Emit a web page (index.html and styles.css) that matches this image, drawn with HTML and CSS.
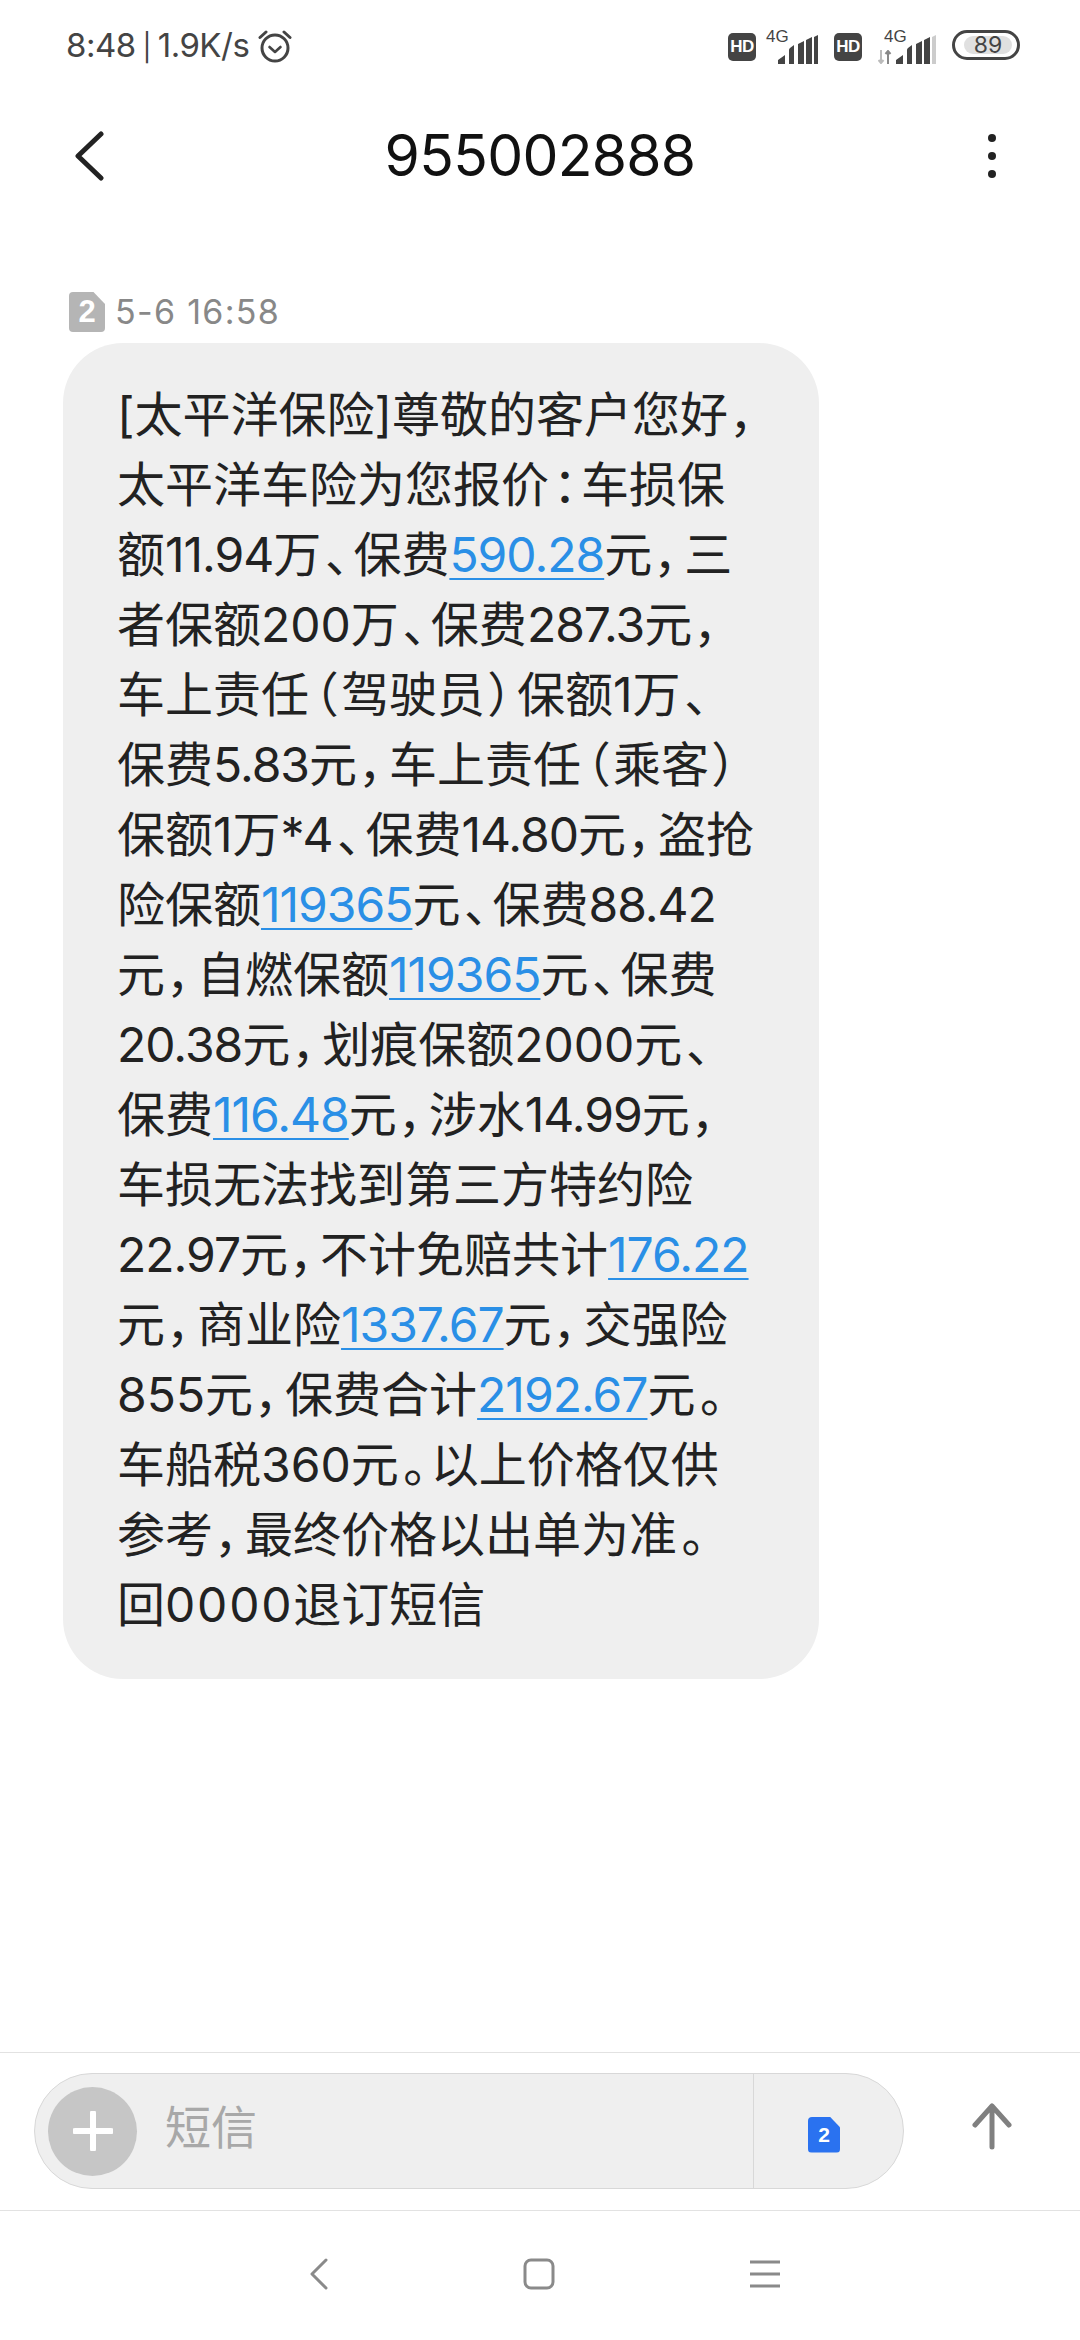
FILE: index.html
```html
<!DOCTYPE html>
<html lang="zh-CN">
<head>
<meta charset="utf-8">
<title>955002888</title>
<link rel="stylesheet" href="styles.css">
</head>
<body>
<div class="screen">
  <div class="status">
    <div class="status-left">
      <span class="clock">8:48 <span class="sep">|</span> 1.9K/s</span>
      <svg class="alarm" viewBox="0 0 34 34" width="34" height="34"><circle cx="17" cy="19" r="13" fill="none" stroke="#444" stroke-width="3"/><path d="M11.5 18l5.5 5 5.500-5" fill="none" stroke="#444" stroke-width="2.600" stroke-linecap="round" stroke-linejoin="round"/><path d="M2 8.500L8 3M32 8.500L26 3" fill="none" stroke="#444" stroke-width="3" stroke-linecap="round"/></svg>
    </div>
    <div class="status-right">
      <span class="hd">HD</span>
      <div class="net">
        <span class="four-g">4G</span>
        <svg class="bars" viewBox="0 0 40 29" width="40" height="29"><path d="M0 29v-4l7-5v9zM11 29V15q0-1 1-2l4-3v19zM20 29V9l6-3v23zM28 29V5l6-3v27zM36 29V2l4-2v29z" fill="#444"/></svg>
      </div>
      <span class="hd hd-second">HD</span>
      <div class="net net-second">
        <svg class="arrows" viewBox="0 0 14 14" width="14" height="14"><path d="M3 0v13M0.500 10L3 13l2.500-3" fill="none" stroke="#bbb" stroke-width="2"/><path d="M10 14V1M7.500 4L10 1l2.500 3" fill="none" stroke="#888" stroke-width="2"/></svg>
        <span class="four-g">4G</span>
        <svg class="bars" viewBox="0 0 40 29" width="40" height="29"><path d="M0 29v-4l7-5v9zM11 29V15q0-1 1-2l4-3v19zM20 29V9l6-3v23zM28 29V5l6-3v27z" fill="#444"/><path d="M36 29V2l4-2v29z" fill="#ccc"/></svg>
      </div>
      <div class="battery"><span class="battery-fill">89</span></div>
    </div>
  </div>

  <div class="title-bar">
    <svg class="back" viewBox="0 0 30 50" width="30" height="50"><path d="M27 3L4 25l23 22" fill="none" stroke="#222" stroke-width="5" stroke-linecap="round" stroke-linejoin="round"/></svg>
    <h1 class="title">955002888</h1>
    <div class="more"><i></i><i></i><i></i></div>
  </div>

  <main class="thread">
    <div class="meta">
      <span class="sim sim-grey">2</span>
      <span class="time">5-6 16:58</span>
    </div>
    <div class="bubble">[太平洋保险]尊敬的客户您好<span class="p">，</span><br>太平洋车险为您报价<span class="p">：</span>车损保<br>额<span class="n">11.94</span>万<span class="p">、</span>保费<a class="link">590.28</a>元<span class="p">，</span>三<br>者保额200万<span class="p">、</span>保费<span class="n">287.3</span>元<span class="p">，</span><br>车上责任<span class="p">（</span>驾驶员<span class="p">）</span>保额1万<span class="p">、</span><br>保费<span class="n">5.83</span>元<span class="p">，</span>车上责任<span class="p">（</span>乘客<span class="p">）</span><br>保额1万*4<span class="p">、</span>保费<span class="n">14.80</span>元<span class="p">，</span>盗抢<br>险保额<a class="link">119365</a>元<span class="p">、</span>保费<span class="n">88.42</span><br>元<span class="p">，</span>自燃保额<a class="link">119365</a>元<span class="p">、</span>保费<br><span class="n">20.38</span>元<span class="p">，</span>划痕保额2000元<span class="p">、</span><br>保费<a class="link">116.48</a>元<span class="p">，</span>涉水<span class="n">14.99</span>元<span class="p">，</span><br>车损无法找到第三方特约险<br><span class="n">22.97</span>元<span class="p">，</span>不计免赔共计<a class="link">176.22</a><br>元<span class="p">，</span>商业险<a class="link">1337.67</a>元<span class="p">，</span>交强险<br>855元<span class="p">，</span>保费合计<a class="link">2192.67</a>元<span class="p">。</span><br>车船税360元<span class="p">。</span>以上价格仅供<br>参考<span class="p">，</span>最终价格以出单为准<span class="p">。</span><br>回<span class="w">0000</span>退订短信</div>
  </main>

  <div class="composer">
    <div class="pill">
      <div class="pill-main">
        <span class="plus"><svg viewBox="0 0 40 40" width="40" height="40"><path d="M2 20h36M20 2v36" stroke="#fff" stroke-width="6" stroke-linecap="round"/></svg></span>
        <span class="placeholder">短信</span>
      </div>
      <div class="pill-sim"><span class="sim sim-blue">2</span></div>
    </div>
    <div class="send">
      <svg viewBox="0 0 40 47" width="40" height="47"><path d="M20 44V3M3 22L20 3l17 19" fill="none" stroke="#808080" stroke-width="5" stroke-linecap="round" stroke-linejoin="round"/></svg>
    </div>
  </div>

  <nav class="nav">
    <svg viewBox="0 0 18 32" width="18" height="32"><path d="M16 2L2 16l14 14" fill="none" stroke="#8a8a8a" stroke-width="3" stroke-linecap="round" stroke-linejoin="round"/></svg>
    <svg viewBox="0 0 32 32" width="32" height="32"><rect x="2" y="2" width="28" height="28" rx="6" fill="none" stroke="#8a8a8a" stroke-width="3"/></svg>
    <svg viewBox="0 0 30 30" width="30" height="30"><path d="M0 3h30M0 15h30M0 27h30" fill="none" stroke="#8a8a8a" stroke-width="3"/></svg>
  </nav>
</div>
</body>
</html>
```

FILE: styles.css
```css
* { box-sizing: border-box; }
html, body { margin: 0; padding: 0; background: #fff; }
body { font-family: Inter, "Noto Sans CJK SC", sans-serif; }

.screen {
  width: 1080px;
  height: 2340px;
  display: flex;
  flex-direction: column;
  overflow: hidden;
}

/* status bar */
.status {
  height: 92px;
  flex: none;
  display: flex;
  justify-content: space-between;
  align-items: flex-start;
  padding: 28px 60px 0 66px;
  color: #444;
}
.status-left { display: flex; align-items: center; gap: 9px; height: 36px; }
.clock { font-size: 33px; line-height: 36px; white-space: nowrap; letter-spacing: -0.5px; word-spacing: -2px; }
.sep { font-size: 27px; }
.alarm { flex: none; }
.status-right { display: flex; align-items: flex-start; height: 36px; }
.hd {
  width: 28px;
  height: 28px;
  margin-top: 5px;
  border-radius: 5px;
  background: #444;
  color: #fff;
  font-size: 17px;
  font-weight: 700;
  line-height: 28px;
  text-align: center;
  font-family: "Liberation Sans", sans-serif;
  letter-spacing: -0.5px;
}
.hd-second { margin-left: 16px; }
.net {
  position: relative;
  width: 52px;
  height: 34px;
  margin-left: 10px;
  margin-top: 2px;
}
.net-second { width: 58px; margin-left: 16px; }
.four-g {
  position: absolute;
  left: 0;
  top: -2px;
  font-size: 17px;
  line-height: 18px;
  color: #444;
  font-family: "Liberation Sans", sans-serif;
}
.net-second .four-g { left: 6px; }
.bars { position: absolute; right: 0; bottom: 0; display: block; }
.arrows { position: absolute; left: 0; bottom: 0; display: block; }
.battery {
  width: 68px;
  height: 30px;
  margin-left: 16px;
  margin-top: 2px;
  border: 3px solid #444;
  border-radius: 15px;
  padding: 3px 5px 3px 9px;
  display: flex;
}
.battery-fill {
  flex: 1;
  background: #e0e0e0;
  border-radius: 9px;
  color: #444;
  font-size: 23px;
  line-height: 18px;
  text-align: center;
}

/* title bar */
.title-bar {
  height: 128px;
  flex: none;
  display: grid;
  grid-template-columns: 1fr auto 1fr;
  align-items: center;
  padding: 0 74px;
}
.back { display: block; }
.title {
  margin: 0;
  font-size: 57px;
  font-weight: 400;
  line-height: 72px;
  color: #111;
  letter-spacing: -0.7px;
}
.more { display: flex; flex-direction: column; gap: 10px; justify-self: end; margin-right: 10px; }
.more i { display: block; width: 8px; height: 8px; border-radius: 50%; background: #222; }

/* thread */
.thread {
  flex: 1;
  min-height: 0;
  padding: 72px 0 0 63px;
}
.meta { display: flex; align-items: center; gap: 10px; height: 40px; padding-left: 6px; }
.sim {
  display: block;
  color: #fff;
  font-weight: 700;
  text-align: center;
  font-family: "Liberation Sans", sans-serif;
  clip-path: polygon(0 0, 68% 0, 100% 30%, 100% 100%, 0 100%);
  border-radius: 4px;
}
.sim-grey { width: 36px; height: 40px; background: #b5b5b5; font-size: 31px; line-height: 40px; }
.sim-blue { width: 32px; height: 36px; background: #2a72f0; font-size: 21px; line-height: 36px; }
.time { font-size: 34px; line-height: 40px; color: #888; letter-spacing: 1.300px; }
.bubble {
  width: 756px;
  margin-top: 11px;
  padding: 37px 0 39px 54px;
  background: #efefef;
  border-radius: 60px;
  color: #222;
  font-size: 48px;
  line-height: 70px;
  white-space: nowrap;
  font-feature-settings: "palt";
}
.p { padding: 0 4px; }
.n { letter-spacing: -1px; }
.w { letter-spacing: 1.800px; }
.link {
  color: #2a8fe6;
  letter-spacing: -1px;
  text-decoration: underline;
  text-decoration-thickness: 2px;
  text-underline-offset: 6px;
}

/* composer */
.composer {
  height: 159px;
  flex: none;
  display: flex;
  align-items: flex-start;
  padding: 20px 0 0 34px;
  border-top: 1px solid #e2e2e2;
  border-bottom: 1px solid #e2e2e2;
}
.pill {
  width: 870px;
  height: 116px;
  flex: none;
  display: flex;
  background: #efefef;
  border: 1px solid #d8d8d8;
  border-radius: 58px;
}
.pill-main {
  width: 719px;
  display: flex;
  align-items: center;
  gap: 28px;
  padding-left: 13px;
  border-right: 1px solid #d8d8d8;
}
.plus {
  width: 89px;
  height: 89px;
  border-radius: 50%;
  background: #c6c6c6;
  display: flex;
  align-items: center;
  justify-content: center;
  flex: none;
}
.placeholder { font-size: 46px; line-height: 60px; color: #a8a8a8; margin-top: -9px; }
.pill-sim { flex: 1; display: flex; align-items: center; padding: 7px 0 0 54px; }
.send { flex: 1; display: flex; justify-content: center; padding-top: 30px; }

/* nav */
.nav {
  height: 129px;
  flex: none;
  display: flex;
  align-items: center;
  padding: 0 300px 3px 310px;
  justify-content: space-between;
}
```
